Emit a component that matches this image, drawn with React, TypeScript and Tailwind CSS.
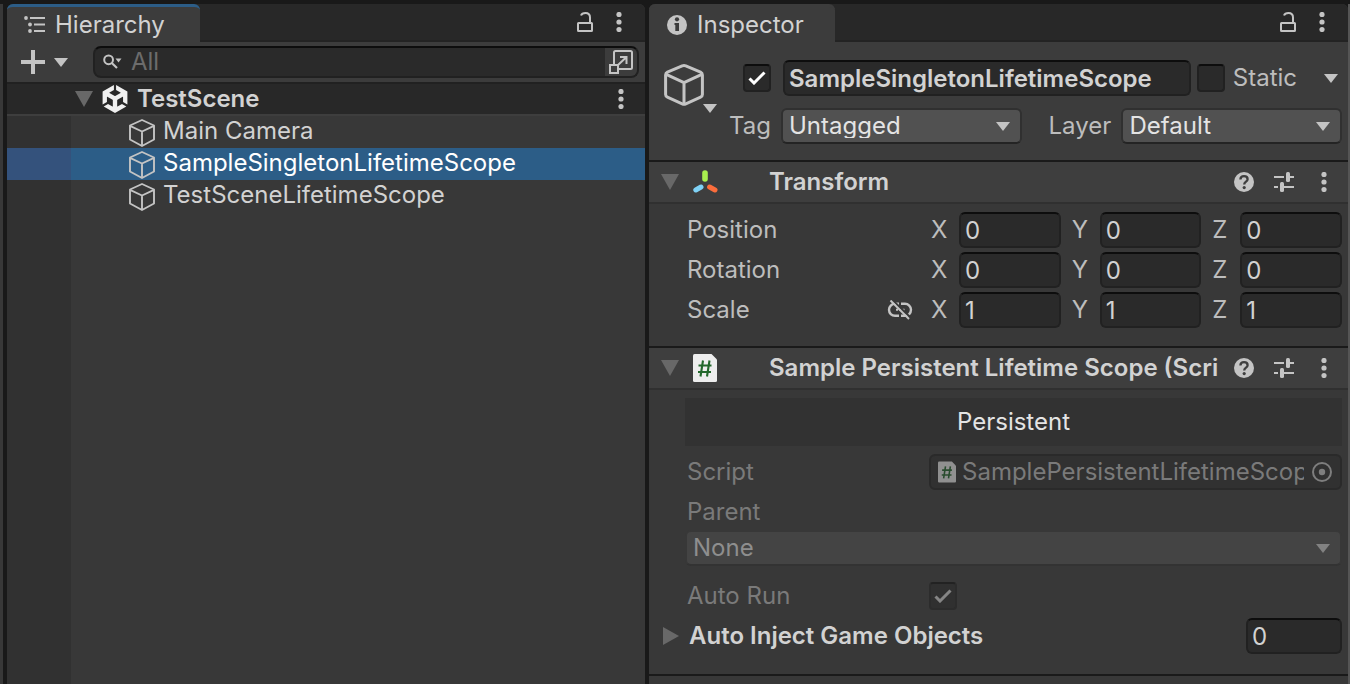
import React, { useState } from "react";
import { SiUnity } from "react-icons/si";

type P = { className?: string };

const Kebab = ({ className = "" }: P) => (
  <svg width="6" height="20" viewBox="0 0 6 20" fill="#c4c4c4" className={"shrink-0 " + className} aria-hidden="true">
    <circle cx="3" cy="2.5" r="2.6" />
    <circle cx="3" cy="10" r="2.6" />
    <circle cx="3" cy="17.5" r="2.6" />
  </svg>
);

const Lock = () => (
  <svg width="16" height="20" viewBox="0 0 16 20" fill="none" stroke="#c4c4c4" strokeWidth="2" aria-hidden="true">
    <rect x="1" y="11" width="14" height="8" rx="0.5" />
    <path d="M4 3.5C4.6 1.8 6.2 1 8.5 1C11.8 1 13 2.8 13 5.5V11" />
  </svg>
);

const Caret = ({ className = "" }: P) => (
  <svg width="14" height="9" viewBox="0 0 14 9" className={"shrink-0 " + className} aria-hidden="true">
    <path d="M0 0H14L7 9Z" fill="currentColor" />
  </svg>
);

const Fold = () => (
  <svg width="18" height="16" viewBox="0 0 18 16" className="shrink-0" aria-hidden="true">
    <path d="M0 0H18L9 16Z" fill="#686868" />
  </svg>
);

const Cube = ({ className = "" }: P) => (
  <svg width="26" height="28" viewBox="0 0 26 28" fill="none" stroke="#c4c4c4" strokeWidth="1.9" strokeLinejoin="round" className={"shrink-0 " + className} aria-hidden="true">
    <path d="M13 1L25 6.5V20.5L13 27L1 20.5V6.5Z" />
    <path d="M1 6.8L13 12.5L25 6.8M13 12.5V27" />
  </svg>
);

const BigCube = () => (
  <svg width="40" height="42" viewBox="0 0 40 42" fill="none" stroke="#c4c4c4" strokeWidth="3" strokeLinejoin="round" className="shrink-0" aria-hidden="true">
    <path d="M18.2 1.9Q20 1.2 21.8 1.9L36.6 8.1Q38.4 9 38.4 11V30.5Q38.4 32.4 36.6 33.2L21.8 39.8Q20 40.6 18.2 39.8L3.4 33.2Q1.6 32.4 1.6 30.5V11Q1.6 9 3.4 8.1Z" />
    <path d="M2.2 10.4L20 18.6L37.8 10.4M20 18.6V40" />
  </svg>
);

const HierarchyIcon = () => (
  <svg width="22" height="17" viewBox="0 0 22 17" fill="#c4c4c4" className="shrink-0" aria-hidden="true">
    <circle cx="2" cy="2" r="1.9" />
    <circle cx="6" cy="8.5" r="1.9" />
    <circle cx="6" cy="15" r="1.9" />
    <path d="M6 1H21V3H6ZM10 7.5H21V9.5H10ZM10 14H21V16H10Z" />
  </svg>
);

const SearchIcon = () => (
  <svg width="20" height="16" viewBox="0 0 20 16" fill="none" stroke="#c4c4c4" className="shrink-0" aria-hidden="true">
    <circle cx="5.6" cy="5.8" r="4.4" strokeWidth="2" />
    <path d="M8.8 9L14 14" strokeWidth="2.2" />
    <path d="M12.5 4.5H18.5L15.5 8.5Z" fill="#c4c4c4" stroke="none" />
  </svg>
);

const PopIcon = () => (
  <svg width="24" height="24" viewBox="0 0 24 24" fill="none" stroke="#c4c4c4" strokeWidth="2" aria-hidden="true">
    <path d="M5 14V2.5Q5 1 6.5 1H21.5Q23 1 23 2.5V17.5Q23 19 21.5 19H10" />
    <path d="M1 15H9V23H1Z" />
    <path d="M9 15L17 7.5M11 7H17.5V14" />
  </svg>
);

const InfoIcon = () => (
  <svg width="20" height="20" viewBox="0 0 20 20" className="shrink-0" aria-hidden="true">
    <circle cx="10" cy="10" r="10" fill="#c4c4c4" />
    <circle cx="10" cy="4.3" r="2.1" fill="#3c3c3c" />
    <path d="M7.5 8H12V16H8.3V10H7.5Z" fill="#3c3c3c" />
  </svg>
);

const HelpIcon = () => (
  <svg width="20" height="20" viewBox="0 0 20 20" fill="none" aria-hidden="true">
    <circle cx="10" cy="10" r="10" fill="#c4c4c4" />
    <path d="M6.4 7.6C6.4 5.2 8 4.2 10 4.2C12.2 4.2 13.6 5.4 13.6 7.2C13.6 9.8 10.2 9.6 10.2 12.6" stroke="#3e3e3e" strokeWidth="2.3" />
    <circle cx="10.2" cy="15.6" r="1.6" fill="#3e3e3e" />
  </svg>
);

const PresetIcon = () => (
  <svg width="20" height="20" viewBox="0 0 20 20" fill="#c4c4c4" aria-hidden="true">
    <path d="M0 4H10V6H0ZM16 4H20V6H16ZM0 14H4V16H0ZM10 14H20V16H10Z" />
    <rect x="12" y="0" width="4" height="10" rx="1.5" />
    <rect x="6" y="10" width="4" height="10" rx="1.5" />
  </svg>
);

const TransformIcon = () => (
  <svg width="26" height="24" viewBox="0 0 26 24" fill="none" strokeWidth="5" strokeLinecap="round" className="shrink-0" aria-hidden="true">
    <path d="M12 3V9" stroke="#a9f04f" strokeWidth="5.6" />
    <path d="M8 17L2.8 20" stroke="#7fd2f6" />
    <path d="M16.6 17L22 20" stroke="#fb6d3c" />
  </svg>
);

const ScriptIcon = ({ className = "" }: P) => (
  <svg viewBox="0 0 24 28" className={"shrink-0 " + className} aria-hidden="true">
    <path d="M1.5 0H18.5L24 5.5V26.5Q24 28 22.5 28H1.5Q0 28 0 26.5V1.5Q0 0 1.5 0Z" fill="#eeeeee" />
    <path d="M10 6.5L7.5 22.5M16.5 6.5L14 22.5M5.5 11.5H18.5M5 18H18" stroke="#23682c" strokeWidth="2.1" fill="none" />
  </svg>
);

const UnlinkIcon = () => (
  <svg width="26" height="20" viewBox="0 0 26 20" fill="none" stroke="#c4c4c4" strokeWidth="2.4" aria-hidden="true">
    <path d="M12 3.8H8A5.9 5.9 0 0 0 8 15.8H12" />
    <path d="M14 3.8H18A5.9 5.9 0 0 1 18 15.8H14" />
    <path d="M9 9.8H11M12.2 9.8H13.8M15.5 9.8H17.5" strokeWidth="2" />
    <path d="M5.2 -0.2L24 18" stroke="#383838" strokeWidth="2" />
    <path d="M3.5 0.5L22 19" strokeWidth="2" />
  </svg>
);

const Check = ({ className = "" }: P) => (
  <svg width="18" height="14" viewBox="0 0 18 14" fill="none" strokeWidth="3" className={"pointer-events-none absolute " + className} aria-hidden="true">
    <path d="M1.5 7.5L6 12L16.5 1.5" stroke="currentColor" />
  </svg>
);

const IconButton = ({ label, children }: { label: string; children: React.ReactNode }) => (
  <button type="button" aria-label={label} className="flex h-6 shrink-0 items-center justify-center">
    {children}
  </button>
);

const field =
  "h-9 min-w-0 rounded-md border-2 border-[#212121] border-t-[#0d0d0d] bg-[#2a2a2a] px-1 text-[#d2d2d2] outline-none";

function Toggle({ id, label, initial, disabled }: { id: string; label: string; initial: boolean; disabled?: boolean }) {
  const [on, setOn] = useState(initial);
  return (
    <span className={"relative flex size-7 shrink-0 items-center justify-center " + (disabled ? "opacity-50" : "")}>
      <input
        id={id}
        type="checkbox"
        aria-label={label}
        checked={on}
        disabled={disabled}
        onChange={() => setOn(!on)}
        className="size-7 appearance-none rounded-sm border-2 border-[#212121] border-t-[#0d0d0d] bg-[#2a2a2a]"
      />
      {on && <Check className={disabled ? "text-[#d2d2d2]" : "text-white"} />}
    </span>
  );
}

function Dropdown({ id, value, className = "" }: { id: string; value: string; className?: string }) {
  return (
    <span className={"relative flex h-9 items-center " + className}>
      <select
        id={id}
        className="h-9 w-full appearance-none rounded-md border-2 border-[#303030] border-b-[#242424] bg-[#515151] px-1.5 pb-1 text-[#e4e4e4]"
      >
        <option>{value}</option>
      </select>
      <Caret className="pointer-events-none absolute right-3 text-[#c4c4c4]" />
    </span>
  );
}

function PanelTabs({ title, icon, active, wide }: { title: string; icon: React.ReactNode; active?: boolean; wide?: boolean }) {
  return (
    <header className="flex h-[38px] items-stretch rounded-t-md bg-[#282828]">
      <h2
        className={
          "flex items-center rounded-t-md border-t-[3px] bg-[#3c3c3c] text-[#d2d2d2] " +
          (wide ? "w-[186px] gap-2.5 pl-[18px] " : "w-[193px] gap-[9px] pl-[17px] ") +
          (active ? "border-[#2c5d87]" : "border-[#3c3c3c]")
        }
      >
        {icon}
        {title}
      </h2>
      <div className="flex flex-1 items-center justify-end gap-[23px] border-b-2 border-[#232323] pr-[23px]">
        <IconButton label={"Lock " + title}><Lock /></IconButton>
        <IconButton label={title + " menu"}><Kebab /></IconButton>
      </div>
    </header>
  );
}

function TreeRow({ name, selected }: { name: string; selected?: boolean }) {
  return (
    <li className={"flex h-8 items-stretch " + (selected ? "bg-[#2c5d87] text-white" : "text-[#d2d2d2]")}>
      <span className={"w-16 shrink-0 " + (selected ? "bg-[#34527c]" : "bg-[#313131]")} />
      <button type="button" className="flex flex-1 items-start gap-2 pl-[58px] text-left leading-[30px]">
        <Cube className="mt-[3px]" />
        {name}
      </button>
    </li>
  );
}

function Hierarchy() {
  return (
    <section aria-label="Hierarchy" className="flex min-w-0 grow-[638] basis-0 flex-col rounded-t-md bg-[#383838]">
      <PanelTabs title="Hierarchy" icon={<HierarchyIcon />} active />
      <div className="flex h-10 items-center bg-[#3c3c3c] pr-1.5 pl-3.5">
        <button type="button" aria-label="Create" className="flex items-center gap-[9px] text-[#c4c4c4]">
          <svg width="24" height="24" viewBox="0 0 24 24" fill="currentColor" aria-hidden="true">
            <path d="M10 0H14V10H24V14H14V24H10V14H0V10H10Z" />
          </svg>
          <Caret />
        </button>
        <div className="ml-[25px] flex h-8 flex-1 items-center rounded-lg border-2 border-[#212121] border-t-[#0d0d0d] bg-[#2a2a2a] pl-2">
          <SearchIcon />
          <input
            type="search"
            aria-label="Search"
            placeholder="All"
            className="h-7 min-w-0 flex-1 bg-transparent pl-2 outline-none placeholder:text-[#6c6c6c]"
          />
          <button
            type="button"
            aria-label="Open in search window"
            className="flex h-7 w-8 items-center justify-center rounded-r-md bg-[#3c3c3c]"
          >
            <PopIcon />
          </button>
        </div>
      </div>
      <div className="flex h-[34px] items-center border-t-2 border-b-2 border-t-[#212121] border-b-[#3e3e3e] bg-[#282828] pr-[21px] pl-[68px] font-semibold text-[#d2d2d2]">
        <Fold />
        <span className="ml-2 flex flex-1 items-center gap-2">
          <SiUnity size={28} color="#f0f0f0" className="shrink-0" aria-hidden="true" />
          TestScene
        </span>
        <IconButton label="Scene menu"><Kebab /></IconButton>
      </div>
      <ul>
        <TreeRow name="Main Camera" />
        <TreeRow name="SampleSingletonLifetimeScope" selected />
        <TreeRow name="TestSceneLifetimeScope" />
      </ul>
      <div className="w-16 flex-1 bg-[#313131]" />
    </section>
  );
}

function ComponentHeader({ title, icon }: { title: string; icon: React.ReactNode }) {
  return (
    <header className="flex h-11 items-center border-t-2 border-b-2 border-t-[#1a1a1a] border-b-[#303030] bg-[#3e3e3e] pr-[21px] pl-3">
      <Fold />
      <span className="ml-3.5 flex w-[76px] shrink-0">{icon}</span>
      <h3 className="min-w-0 flex-1 overflow-hidden font-semibold whitespace-nowrap text-[#d2d2d2]">{title}</h3>
      <div className="ml-4 flex items-center">
        <IconButton label={"Help for " + title}><HelpIcon /></IconButton>
        <span className="w-5" />
        <IconButton label="Presets"><PresetIcon /></IconButton>
        <span className="w-[27px]" />
        <IconButton label="Component menu"><Kebab /></IconButton>
      </div>
    </header>
  );
}

function VectorRow({ label, value, linked }: { label: string; value: string; linked?: boolean }) {
  return (
    <div className="grid h-9 grid-cols-[244fr_411fr] items-center">
      <span className="flex items-center justify-between pr-[18px]">
        {label}
        {linked && <IconButton label="Constrain proportions"><UnlinkIcon /></IconButton>}
      </span>
      <div className="grid grid-cols-3 gap-[11px]">
        {["X", "Y", "Z"].map((axis) => (
          <label key={axis} className="flex min-w-0 items-center">
            <span className="w-7 shrink-0">{axis}</span>
            <input type="text" defaultValue={value} aria-label={label + " " + axis} className={field + " flex-1"} />
          </label>
        ))}
      </div>
    </div>
  );
}

function Inspector() {
  return (
    <section aria-label="Inspector" className="flex min-w-0 grow-[699] basis-0 flex-col rounded-t-md bg-[#383838] text-[#bdbdbd]">
      <PanelTabs title="Inspector" icon={<InfoIcon />} wide />
      <div className="flex h-[118px] bg-[#3c3c3c] pt-[18px] pr-1.5 pl-[15px]">
        <button type="button" aria-label="Select icon" className="flex h-14 w-[53px] shrink-0 flex-col items-end pt-1">
          <span className="self-start"><BigCube /></span>
          <Caret className="-mt-0.5 text-[#c4c4c4]" />
        </button>
        <div className="flex min-w-0 flex-1 flex-col gap-3 pl-3">
          <div className="flex h-9 items-center">
            <span className="ml-3.5 flex"><Toggle id="active" label="Active" initial={true} /></span>
            <input
              type="text"
              aria-label="Name"
              defaultValue="SampleSingletonLifetimeScope"
              className={field + " ml-3 flex-1 font-semibold"}
            />
            <span className="ml-1.5 flex"><Toggle id="static" label="Static" initial={false} /></span>
            <label htmlFor="static" className="ml-2">Static</label>
            <button type="button" aria-label="Static options" className="mr-1 ml-[27px] text-[#c4c4c4]">
              <Caret />
            </button>
          </div>
          <div className="flex h-9 items-center">
            <label htmlFor="tag" className="w-[52px] shrink-0">Tag</label>
            <Dropdown id="tag" value="Untagged" className="flex-[242] basis-0" />
            <label htmlFor="layer" className="ml-[26px] w-[73px] shrink-0">Layer</label>
            <Dropdown id="layer" value="Default" className="flex-[221] basis-0" />
          </div>
        </div>
      </div>

      <ComponentHeader title="Transform" icon={<TransformIcon />} />
      <div className="flex flex-col gap-1 pt-2 pr-1.5 pb-[18px] pl-[38px]">
        <VectorRow label="Position" value="0" />
        <VectorRow label="Rotation" value="0" />
        <VectorRow label="Scale" value="1" linked />
      </div>

      <ComponentHeader title="Sample Persistent Lifetime Scope (Script)" icon={<ScriptIcon className="h-7 w-6" />} />
      <div className="flex flex-col border-b-2 border-[#1a1a1a] pt-2 pr-1.5 pb-5 pl-9">
        <p className="flex h-12 items-center justify-center bg-[#323232] text-[#e4e4e4]">Persistent</p>
        <div className="mt-2 grid h-9 grid-cols-[244fr_413fr] items-center text-[#7a7a7a]">
          <span className="pl-0.5">Script</span>
          <div className="flex h-9 min-w-0 items-center rounded-md border-2 border-[#2a2a2a] bg-[#313131] pr-2 pl-[7px]">
            <ScriptIcon className="h-[22px] w-[18px] opacity-50" />
            <span className="ml-1.5 min-w-0 flex-1 overflow-hidden whitespace-nowrap">SamplePersistentLifetimeScope</span>
            <button type="button" aria-label="Pick script" disabled className="ml-2">
              <svg width="20" height="20" viewBox="0 0 20 20" fill="none" aria-hidden="true">
                <circle cx="10" cy="10" r="9" stroke="#7e7e7e" strokeWidth="2" />
                <circle cx="10" cy="10" r="3.2" fill="#7e7e7e" />
              </svg>
            </button>
          </div>
        </div>
        <label htmlFor="parent" className="mt-1 h-9 pl-0.5 leading-9 text-[#7a7a7a]">Parent</label>
        <span className="relative flex h-9 items-center">
          <select
            id="parent"
            disabled
            className="h-9 w-full appearance-none rounded-md border-2 border-[#383838] border-b-[#333333] bg-[#444444] px-1.5 pb-1 text-[#8e8e8e] opacity-100"
          >
            <option>None</option>
          </select>
          <Caret className="pointer-events-none absolute right-3 text-[#828282]" />
        </span>
        <div className="mt-3 grid h-9 grid-cols-[244fr_413fr] items-center text-[#7a7a7a]">
          <label htmlFor="autorun" className="pl-0.5">Auto Run</label>
          <Toggle id="autorun" label="Auto Run" initial={true} disabled />
        </div>
        <div className="mt-1 -ml-6 flex h-9 items-center">
          <button type="button" className="flex flex-1 items-center gap-2.5 text-left font-semibold text-[#d2d2d2]">
            <svg width="18" height="18" viewBox="0 0 18 18" aria-hidden="true">
              <path d="M2 0V18L18 9Z" fill="#686868" />
            </svg>
            Auto Inject Game Objects
          </button>
          <input type="text" aria-label="Auto Inject Game Objects size" defaultValue="0" className={field + " w-24"} />
        </div>
      </div>
    </section>
  );
}

export default function App() {
  return (
    <main className="flex min-h-screen items-stretch overflow-hidden bg-[#191919] pt-1 font-[Inter,'Liberation_Sans',sans-serif] text-2xl leading-8">
      <div className="mr-1 w-[3px] shrink-0 bg-[#383838]" />
      <Hierarchy />
      <div className="w-1 shrink-0" />
      <Inspector />
      <div className="w-0.5 shrink-0 bg-[#555555]" />
    </main>
  );
}
